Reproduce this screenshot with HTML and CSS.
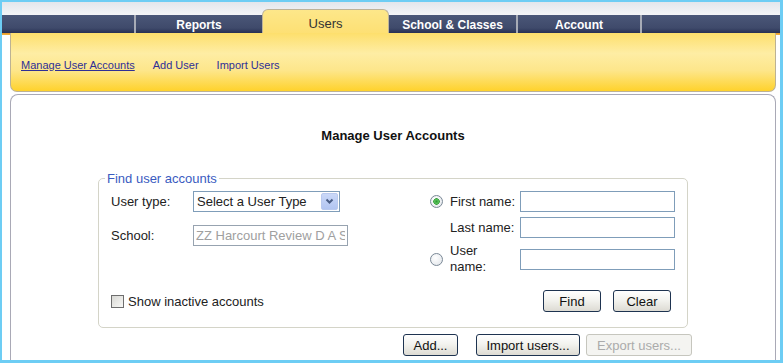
FILE: index.html
```html
<!DOCTYPE html>
<html lang="en">
<head>
    <meta charset="UTF-8">
    <title>Manage User Accounts</title>
    <link rel="stylesheet" href="styles.css">
</head>
<body>
    <div class="frame">
        <div class="header">
            <div class="tab-spacer"></div>
            <a class="tab tab-reports sep" href="#">Reports</a>
            <a class="tab active" href="#">Users</a>
            <a class="tab tab-school" href="#">School &amp; Classes</a>
            <a class="tab tab-account sep" href="#">Account</a>
            <div class="tab-rest"></div>
        </div>

        <div class="subnav-wrap">
            <div class="subnav">
                <a class="current" href="#">Manage User Accounts</a>
                <a href="#">Add User</a>
                <a href="#">Import Users</a>
            </div>
        </div>

        <div class="panel">
            <h1>Manage User Accounts</h1>

            <fieldset class="find">
                <legend>Find user accounts</legend>
                <div class="find-body">
                    <div class="find-left">
                        <span class="lbl">User type:</span>
                        <div class="select">
                            <span>Select a User Type</span>
                            <span class="dd">
                                <svg width="9" height="7" viewBox="0 0 9 7"><polyline points="1.5,1.5 4.5,4.5 7.5,1.5" fill="none" stroke="#4a5e86" stroke-width="2"/></svg>
                            </span>
                        </div>
                        <span class="lbl">School:</span>
                        <input class="text-input school" type="text" value="ZZ Harcourt Review D A S" readonly>
                    </div>

                    <div class="find-right">
                        <span class="radio checked"></span>
                        <span class="lbl">First name:</span>
                        <input class="text-input" type="text">

                        <span></span>
                        <span class="lbl">Last name:</span>
                        <input class="text-input" type="text">

                        <span class="radio"></span>
                        <span class="lbl two-line">User<br>name:</span>
                        <input class="text-input" type="text">
                    </div>
                </div>

                <div class="find-foot">
                    <label class="check">
                        <span class="box"></span>
                        Show inactive accounts
                    </label>
                    <div class="foot-buttons">
                        <button class="btn btn-small">Find</button>
                        <button class="btn btn-small">Clear</button>
                    </div>
                </div>
            </fieldset>

            <div class="actions">
                <button class="btn btn-add">Add...</button>
                <button class="btn btn-import">Import users...</button>
                <button class="btn btn-export" disabled>Export users...</button>
            </div>
        </div>
    </div>
</body>
</html>
```

FILE: styles.css
```css
* {
    margin: 0;
    padding: 0;
    box-sizing: border-box;
}

body {
    font-family: 'Liberation Sans', Arial, sans-serif;
    font-size: 13px;
    color: #222;
    background: #fff;
}

.frame {
    width: 783px;
    height: 363px;
    border-style: solid;
    border-color: #6dcdf4;
    border-width: 2px 3px 3px 2px;
    display: flex;
    flex-direction: column;
    overflow: hidden;
}

/* Top tab bar */
.header {
    height: 31px;
    flex: none;
    display: flex;
    align-items: flex-end;
    background: linear-gradient(to bottom, #e2e6ec 0, #f4f5f7 13px, #4b5778 13px, #3f4a6b 26px, #283153 31px);
}

.tab-spacer {
    width: 132px;
    height: 18px;
}

.tab {
    height: 18px;
    line-height: 20px;
    text-align: center;
    color: #fff;
    font-weight: bold;
    font-size: 12px;
    text-decoration: none;
}

.tab.sep {
    border-left: 2px solid #a7abb6;
}

.tab-reports { width: 128px; }
.tab-school { width: 127px; }
.tab-account { width: 124px; }

.tab.active {
    width: 127px;
    height: 24px;
    line-height: 28px;
    border: 1px solid #bdb39a;
    border-bottom: none;
    border-radius: 6px 6px 0 0;
    background: linear-gradient(#fde78a, #fde074);
    color: #333;
    font-weight: normal;
    font-size: 13px;
}

.tab-rest {
    flex: 1;
    height: 18px;
    border-left: 2px solid #a7abb6;
}

/* Yellow sub navigation */
.subnav-wrap {
    flex: none;
    padding: 0 4px 0 8px;
    background: linear-gradient(#e69628 0, #f2b43c 2px, #fff 2px);
}

.subnav {
    height: 59px;
    border: 1px solid #bcb294;
    border-top: none;
    border-radius: 0 0 7px 7px;
    background: linear-gradient(to bottom, #fddf6c 0, #feeda4 35%, #fde68a 65%, #ffd22c 100%);
    padding: 25px 0 0 10px;
    font-size: 11px;
    line-height: 14px;
    display: flex;
    gap: 18px;
}

.subnav a {
    color: #2f2f96;
    text-decoration: none;
}

.subnav a.current {
    text-decoration: underline;
}

/* Main panel */
.panel {
    flex: 1;
    margin: 2px 4px 0 8px;
    border: 1px solid #a9a9b6;
    border-bottom: none;
    border-radius: 8px 8px 0 0;
}

.panel h1 {
    font-size: 13px;
    font-weight: bold;
    line-height: 16px;
    text-align: center;
    padding-top: 33px;
    color: #111;
}

.find {
    width: 590px;
    margin: 27px auto 0;
    border: 1px solid #d4d4c8;
    border-radius: 5px;
    padding: 5px 12px 15px 12px;
}

.find legend {
    color: #3a5bbf;
    font-size: 13px;
    line-height: 15px;
    padding: 0 2px;
    margin-left: -6px;
}

.find-body {
    display: flex;
    justify-content: space-between;
    align-items: flex-start;
}

.find-left {
    display: grid;
    grid-template-columns: 82px auto;
    row-gap: 13px;
    align-items: center;
}

.find-right {
    display: grid;
    grid-template-columns: 20px 70px 155px;
    row-gap: 5px;
    align-items: center;
}

.lbl {
    color: #222;
}

.lbl.two-line {
    line-height: 16px;
}

.select {
    width: 147px;
    height: 21px;
    border: 1px solid #7f9db9;
    display: flex;
    align-items: center;
    justify-content: space-between;
    padding-left: 3px;
    background: #fff;
}

.select .dd {
    width: 17px;
    height: 17px;
    margin-right: 1px;
    border: 1px solid #b9c9ee;
    border-radius: 2px;
    background: linear-gradient(#cad8f8, #b2c5f1);
    display: flex;
    align-items: center;
    justify-content: center;
}

.text-input {
    width: 155px;
    height: 21px;
    border: 1px solid #7f9db9;
    background: #fff;
    font-family: inherit;
    font-size: 13px;
    padding: 0 2px;
    outline: none;
}

.text-input.school {
    color: #a0a0a0;
    border-color: #97a3b0;
}

.radio {
    width: 13px;
    height: 13px;
    border-radius: 50%;
    border: 1px solid #7a8896;
    background: radial-gradient(circle at 40% 35%, #fff, #dfe3e8);
}

.radio.checked {
    background: radial-gradient(circle, #2f9a34 0, #58c25a 2px, #3da040 3px, transparent 3.5px),
                radial-gradient(circle at 40% 35%, #fff, #dfe3e8);
}

.find-foot {
    display: flex;
    align-items: center;
    justify-content: space-between;
    margin-top: 15px;
}

.check {
    display: flex;
    align-items: center;
    gap: 4px;
}

.check .box {
    width: 13px;
    height: 13px;
    border: 1px solid #6e6e6e;
    background: linear-gradient(135deg, #d8d8d4, #f8f8f6);
}

.foot-buttons {
    display: flex;
    gap: 12px;
    margin-right: 4px;
}

.btn {
    height: 22px;
    font-family: inherit;
    font-size: 13px;
    color: #111;
    border: 1px solid #1e3350;
    border-radius: 3px;
    background: linear-gradient(#ffffff, #f3f3ef 45%, #dddbd3);
}

.btn-small { width: 58px; }

.actions {
    display: flex;
    justify-content: flex-end;
    margin-top: 6px;
    padding-right: 83px;
}

.btn-add { width: 55px; margin-right: 18px; }
.btn-import { width: 104px; margin-right: 6px; }

.btn-export {
    width: 106px;
    color: #ababab;
    border-color: #c6c6be;
    background: #f4f4f1;
}
```
